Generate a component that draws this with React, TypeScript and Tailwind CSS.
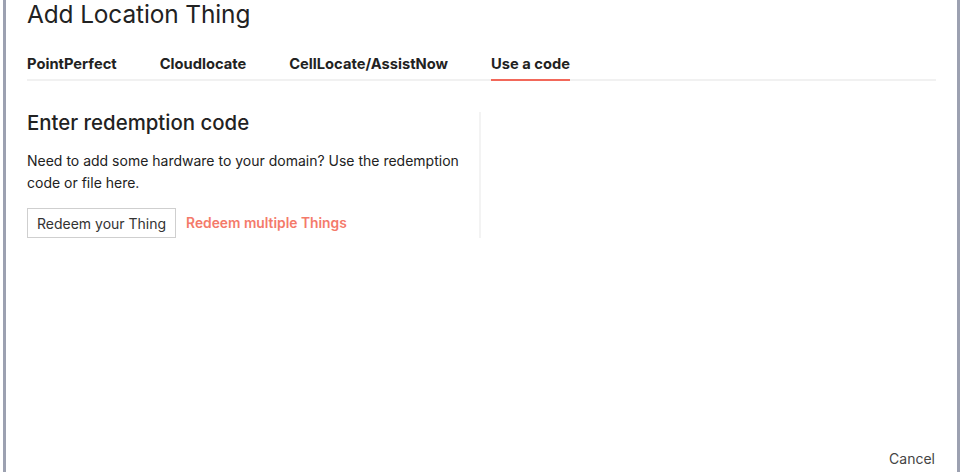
import React from "react";

export default function App() {
  const font = { fontFamily: "Inter, 'Noto Sans', sans-serif" };
  return (
    <div className="relative w-[964px] h-[475px] bg-white overflow-hidden" style={font}>
      <div className="ml-[3px] w-[957px] h-[472px] border-x-[3px] border-[#9ca1b1] flex flex-col pl-[21px] pr-[21px]">
        <h1 className="text-[24.4px] leading-[30px] text-[#222] mt-[-1px] tracking-[-0.1px]">Add Location Thing</h1>
        <div className="mt-[24px] flex gap-[43px] border-b-2 border-[#f1f1f1] text-[14.7px] leading-[22px] font-bold text-[#222]">
          <div className="pb-[4px]">PointPerfect</div>
          <div className="pb-[4px]">Cloudlocate</div>
          <div className="pb-[4px]">CellLocate/AssistNow</div>
          <div className="pb-[2px] border-b-2 border-[#f2685a] mb-[-2px]">Use a code</div>
        </div>
        <div className="mt-[31px] flex">
          <div className="w-[454px] border-r-2 border-[#f3f3f3] pr-[20px] h-[126px]">
            <h2 className="mt-[-2px] text-[20.4px] leading-[26px] font-medium text-[#222]">Enter redemption code</h2>
            <p className="mt-[14px] text-[14px] leading-[22px] text-[#222]">
              Need to add some hardware to your domain? Use the redemption code or file here.
            </p>
            <div className="mt-[14px] flex items-center gap-[10px]">
              <button className="h-[30px] px-[9px] border border-[#cfcfcf] text-[14px] text-[#333] bg-white">Redeem your Thing</button>
              <span className="text-[13.8px] font-semibold text-[#f47a6a]">Redeem multiple Things</span>
            </div>
          </div>
        </div>
        <div className="mt-auto mb-[3px] flex justify-end">
          <span className="text-[14px] text-[#444] pr-[1px]">Cancel</span>
        </div>
      </div>
    </div>
  );
}
